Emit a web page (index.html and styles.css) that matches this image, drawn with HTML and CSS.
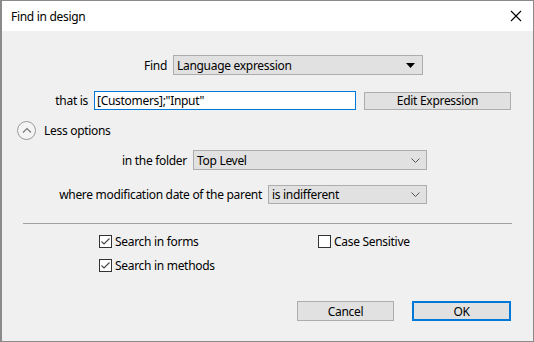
FILE: index.html
```html
<!DOCTYPE html>
<html>
<head>
<meta charset="utf-8">
<link rel="stylesheet" href="styles.css">
</head>
<body>
<div class="window">
  <div class="titlebar">
    <span class="title">Find in design</span>
    <svg class="close" width="12" height="12" viewBox="0 0 12 12"><path d="M1 1 L11 11 M11 1 L1 11" stroke="#000" stroke-width="1.1" fill="none"/></svg>
  </div>
  <div class="content">
    <div class="row r-find">
      <span class="label l-find">Find</span>
      <div class="select s-find"><span>Language expression</span>
        <svg width="9" height="5" viewBox="0 0 9 5"><path d="M0 0 H9 L4.5 5 Z" fill="#000"/></svg>
      </div>
    </div>
    <div class="row r-that">
      <span class="label l-that">that is</span>
      <div class="input">[Customers];"Input"</div>
      <div class="button b-edit">Edit Expression</div>
    </div>
    <div class="row r-less">
      <span class="circle"><svg width="10" height="6" viewBox="0 0 10 6"><path d="M1 5.5 L5 1.5 L9 5.5" stroke="#777" stroke-width="1.1" fill="none"/></svg></span>
      <span class="less-text">Less options</span>
    </div>
    <div class="row r-folder">
      <span class="label l-folder">in the folder</span>
      <div class="select s-folder"><span>Top Level</span>
        <svg width="9" height="5" viewBox="0 0 9 5"><path d="M0.5 0.5 L4.5 4.5 L8.5 0.5" stroke="#555" stroke-width="1" fill="none"/></svg>
      </div>
    </div>
    <div class="row r-date">
      <span class="label l-date">where modification date of the parent</span>
      <div class="select s-date"><span>is indifferent</span>
        <svg width="9" height="5" viewBox="0 0 9 5"><path d="M0.5 0.5 L4.5 4.5 L8.5 0.5" stroke="#555" stroke-width="1" fill="none"/></svg>
      </div>
    </div>
    <div class="separator"></div>
    <div class="checks">
      <label class="check"><span class="box"><svg width="11" height="11" viewBox="0 0 11 11"><path d="M1.5 5.5 L4 8 L9.5 2.5" stroke="#444" stroke-width="1.1" fill="none"/></svg></span>Search in forms</label>
      <label class="check"><span class="box"></span>Case Sensitive</label>
      <label class="check"><span class="box"><svg width="11" height="11" viewBox="0 0 11 11"><path d="M1.5 5.5 L4 8 L9.5 2.5" stroke="#444" stroke-width="1.1" fill="none"/></svg></span>Search in methods</label>
    </div>
    <div class="row r-buttons">
      <div class="button b-cancel">Cancel</div>
      <div class="button b-ok">OK</div>
    </div>
  </div>
</div>
</body>
</html>
```

FILE: styles.css
```css
* { box-sizing: border-box; }
html, body { margin: 0; padding: 0; }
body {
  font-family: "Noto Sans", "Open Sans", sans-serif;
  font-size: 12px;
  letter-spacing: -0.3px;
  color: #000;
  background: #f0f0f0;
}
.window {
  width: 534px;
  height: 342px;
  border: 1px solid #8a8a8a;
  border-left: 2px solid #8a8a8a;
  background: #f0f0f0;
  display: flex;
  flex-direction: column;
}
.titlebar {
  height: 30px;
  background: #fff;
  display: flex;
  align-items: center;
  justify-content: space-between;
  padding: 0 11px 0 9px;
  flex-shrink: 0;
}
.title { font-size: 12px; }
.close { display: block; }
.content {
  display: flex;
  flex-direction: column;
}
.row {
  display: flex;
  align-items: center;
}
.label {
  text-align: right;
  white-space: nowrap;
}
.select {
  height: 20px;
  background: #e1e1e1;
  border: 1px solid #adadad;
  display: flex;
  align-items: center;
  justify-content: space-between;
  padding: 0 6px 0 3px;
}
.select svg { display: block; }
.r-find { margin-top: 24px; }
.l-find { width: 165px; margin-right: 6px; }
.s-find { width: 250px; padding-right: 7px; }
.r-that { margin-top: 16px; }
.l-that { width: 86px; margin-right: 6px; }
.input {
  width: 262px;
  height: 19px;
  border: 1px solid #0078d7;
  background: #fff;
  padding: 0 2px;
  display: flex;
  align-items: center;
  white-space: nowrap;
}
.button {
  background: #e1e1e1;
  border: 1px solid #adadad;
  display: flex;
  align-items: center;
  justify-content: center;
}
.b-edit { width: 147px; height: 18px; margin-left: 8px; }
.r-less { margin-top: 11px; padding-left: 15px; }
.circle {
  width: 19px;
  height: 19px;
  border: 1px solid #9a9a9a;
  border-radius: 50%;
  display: flex;
  align-items: center;
  justify-content: center;
  margin-right: 8px;
  background: #f4f4f4;
}
.circle svg { display: block; margin-top: -2px; }
.r-folder { margin-top: 10px; }
.l-folder { width: 185px; margin-right: 6px; }
.s-folder { width: 234px; }
.r-date { margin-top: 15px; }
.l-date { width: 260px; margin-right: 6px; }
.s-date { width: 159px; height: 19px; }
.separator {
  margin: 19px 0 0 21px;
  width: 489px;
  height: 1px;
  background: #a0a0a0;
}
.checks {
  display: grid;
  grid-template-columns: 219px auto;
  row-gap: 11px;
  margin: 11px 0 0 97px;
}
.check {
  display: flex;
  align-items: center;
  height: 13px;
  white-space: nowrap;
}
.box {
  width: 13px;
  height: 13px;
  border: 1px solid #333;
  background: #fff;
  margin-right: 3px;
  display: flex;
  align-items: center;
  justify-content: center;
}
.box svg { display: block; }
.r-buttons { margin-top: 29px; padding-left: 295px; }
.b-cancel { width: 97px; height: 20px; }
.b-ok { width: 99px; height: 20px; margin-left: 18px; border: 2px solid #0078d7; }
```
